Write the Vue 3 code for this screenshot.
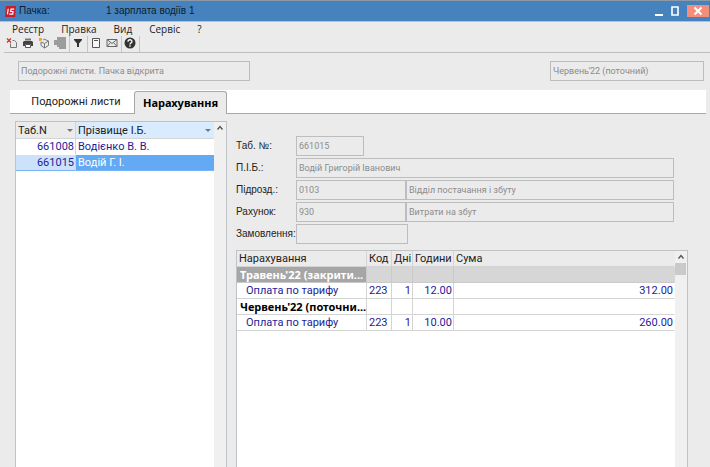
<template>
  <div class="window">
    <header class="titlebar">
      <svg class="app-logo" viewBox="0 0 12 12" aria-hidden="true">
        <path d="M1 0h11l-1 12H0z" fill="#c61f2d" />
        <path d="M3.5 3 2.7 9M10 3.5H6.6L6.2 6h2.6l-.4 2.8H4.6" fill="none" stroke="#fff" stroke-width="1.3" />
      </svg>
      <span class="title-label">Пачка:</span>
      <span class="title-name">1 зарплата водіїв 1</span>
      <div class="window-buttons">
        <button type="button" class="win-btn" aria-label="Згорнути">
          <svg viewBox="0 0 16 12"><path d="M4 10h8" stroke="#fff" stroke-width="2" /></svg>
        </button>
        <button type="button" class="win-btn" aria-label="Розгорнути">
          <svg viewBox="0 0 16 12"><path d="M5 2h6v8H5z" fill="none" stroke="#fff" stroke-width="1.6" /></svg>
        </button>
        <button type="button" class="win-btn close" aria-label="Закрити">
          <svg viewBox="0 0 16 12"><path d="m4.5 2.5 7 7m0-7-7 7" stroke="#fff" stroke-width="2" /></svg>
        </button>
      </div>
    </header>

    <nav class="menu">
      <button v-for="item in menu" :key="item" type="button">{{ item }}</button>
    </nav>

    <div class="toolbar">
      <div class="tool-group">
        <button type="button" aria-label="Видалити">
          <svg viewBox="0 0 12 12">
            <path d="m1 1.5 4 4m0-4-4 4" stroke="#c8372d" stroke-width="1.3" />
            <path d="M6.5 3.5h2l2 2v5h-6v-4" fill="none" stroke="#777" />
          </svg>
        </button>
        <button type="button" aria-label="Друк">
          <svg viewBox="0 0 12 12">
            <path d="M3 1.5h6v2H3z" fill="#777" />
            <path d="M2 4h8l1 1v4H9V7H3v2H1V5z" fill="#444" />
            <path d="M3.5 7.5h5v3h-5z" fill="#fff" stroke="#555" />
          </svg>
        </button>
        <button type="button" aria-label="Розрахунок">
          <svg viewBox="0 0 12 12">
            <path d="M7 2.5 10.5 4v4.5L6.5 11 3 8.5V5m0 0 3.5 1.5L10.5 4M6.5 6.5V11" fill="none" stroke="#777" />
            <path d="M1 1h3v1.5L3 4H1z" fill="#e8a33c" />
            <path d="m5 3 2-1" stroke="#777" />
          </svg>
        </button>
        <button type="button" aria-label="Операції" disabled>
          <svg viewBox="0 0 12 12"><path d="M3 0h9v12H5v-2H3V8H0V3h3z" fill="#9c9c9c" /></svg>
        </button>
      </div>
      <div class="tool-group">
        <button type="button" aria-label="Фільтр">
          <svg viewBox="0 0 12 12"><path d="M2 2h8v1L7 6.5V10H5V6.5L2 3z" fill="#333" /></svg>
        </button>
      </div>
      <div class="tool-group">
        <button type="button" aria-label="Документ">
          <svg viewBox="0 0 12 12">
            <path d="M2.5 1.5h7v9h-7z" fill="#f6f6f6" stroke="#555" />
            <path d="M4 3.5h4" stroke="#555" />
          </svg>
        </button>
        <button type="button" aria-label="Пошта">
          <svg viewBox="0 0 12 12">
            <path d="M1 2.5h10v7H1zl5 4 5-4M1 9.5l3.5-4m3 0 3.5 4" fill="none" stroke="#666" />
          </svg>
        </button>
      </div>
      <div class="tool-group">
        <button type="button" aria-label="Довідка">
          <svg viewBox="0 0 12 12">
            <circle cx="6" cy="6" r="5.5" fill="#333" />
            <path d="M4 4.8C4 2 8 2.2 8 4.5 8 6 6 5.8 6 7.4" fill="none" stroke="#fff" stroke-width="1.3" />
            <path d="M6 8.3v1.4" stroke="#fff" stroke-width="1.3" />
          </svg>
        </button>
      </div>
    </div>

    <div class="status-row">
      <input class="field status" type="text" value="Подорожні листи. Пачка відкрита" aria-label="Стан пачки" readonly />
      <input class="field period" type="text" value="Червень'22 (поточний)" aria-label="Період" readonly />
    </div>

    <div class="tabs" role="tablist">
      <button type="button" role="tab" class="tab" aria-selected="false">Подорожні листи</button>
      <button type="button" role="tab" class="tab active" aria-selected="true">Нарахування</button>
    </div>

    <main class="content">
      <section class="people">
        <div class="table-area">
          <table>
            <colgroup><col class="c-num" /><col /></colgroup>
            <thead>
              <tr>
                <th><span class="head-cell">Таб.N<i class="sort"></i></span></th>
                <th class="sorted"><span class="head-cell">Прізвище І.Б.<i class="sort"></i></span></th>
              </tr>
            </thead>
            <tbody>
              <tr v-for="p in people" :key="p.id" :class="{ selected: p.id === selectedId }" @click="selectedId = p.id">
                <td class="num">{{ p.id }}</td>
                <td>{{ p.name }}</td>
              </tr>
            </tbody>
          </table>
        </div>
        <div class="scroll">
          <svg viewBox="0 0 12 12"><path d="m3.5 7.5 2.5-3 2.5 3" fill="none" stroke="#555" stroke-width="1.4" /></svg>
        </div>
      </section>

      <section class="details">
        <form class="form" @submit.prevent>
          <label for="tab-no">Таб. №:</label>
          <div class="line"><input id="tab-no" class="field short" type="text" value="661015" readonly /></div>
          <label for="pib">П.І.Б.:</label>
          <div class="line"><input id="pib" class="field" type="text" value="Водій Григорій Іванович" readonly /></div>
          <label for="dept">Підрозд.:</label>
          <div class="line">
            <input id="dept" class="field code" type="text" value="0103" readonly />
            <input class="field" type="text" value="Відділ постачання і збуту" aria-label="Назва підрозділу" readonly />
          </div>
          <label for="account">Рахунок:</label>
          <div class="line">
            <input id="account" class="field code" type="text" value="930" readonly />
            <input class="field" type="text" value="Витрати на збут" aria-label="Назва рахунку" readonly />
          </div>
          <label for="order">Замовлення:</label>
          <div class="line"><input id="order" class="field order" type="text" value="" readonly /></div>
        </form>

        <div class="charges">
          <div class="table-area">
            <table>
              <colgroup>
                <col class="c-name" /><col class="c-code" /><col class="c-days" /><col class="c-hours" /><col />
              </colgroup>
              <thead>
                <tr><th v-for="h in heads" :key="h">{{ h }}</th></tr>
              </thead>
              <tbody>
                <template v-for="g in groups" :key="g.title">
                  <tr class="group" :class="{ current: g.current }">
                    <td>{{ g.title }}</td><td></td><td></td><td></td><td></td>
                  </tr>
                  <tr>
                    <td class="item">Оплата по тарифу</td>
                    <td>{{ g.code }}</td>
                    <td class="num">{{ g.days }}</td>
                    <td class="num">{{ g.hours }}</td>
                    <td class="num">{{ g.sum }}</td>
                  </tr>
                </template>
              </tbody>
            </table>
          </div>
          <div class="scroll">
            <svg viewBox="0 0 12 12"><path d="m3.5 7.5 2.5-3 2.5 3" fill="none" stroke="#555" stroke-width="1.4" /></svg>
            <div class="thumb"></div>
          </div>
        </div>
      </section>
    </main>
  </div>
</template>

<script setup>
import { ref } from 'vue'

const menu = ['Реєстр', 'Правка', 'Вид', 'Сервіс', '?']
const heads = ['Нарахування', 'Код', 'Дні', 'Години', 'Сума']

const selectedId = ref(661015)
const people = [
  { id: 661008, name: 'Водієнко В. В.' },
  { id: 661015, name: 'Водій Г. І.' }
]

const groups = [
  { title: "Травень'22 (закрити...", current: true, code: 223, days: 1, hours: '12.00', sum: '312.00' },
  { title: "Червень'22 (поточни...", current: false, code: 223, days: 1, hours: '10.00', sum: '260.00' }
]
</script>

<style>
body { margin: 0; background: #ebebeb; }
</style>

<style scoped>
.window { height: 100vh; display: flex; flex-direction: column; overflow: hidden; background: #ebebeb; color: #222; font-family: Roboto, "Noto Sans", sans-serif; font-size: 11px; line-height: 14px; }
.window * { box-sizing: border-box; }
button { margin: 0; padding: 0; border: 0; background: none; color: inherit; font: inherit; }
svg { display: block; }

.titlebar { flex: none; height: 22px; display: flex; align-items: center; padding-left: 5px; background: #4682bd; border-top: 1px solid #8c9aa8; border-bottom: 1px solid #a9c3dd; color: #0d1c2c; font-family: "Liberation Sans", sans-serif; font-size: 10px; }
.app-logo { width: 11px; height: 11px; }
.title-label { width: 87px; margin-left: 3px; }
.title-name { flex: 1; }
.window-buttons { display: flex; }
.win-btn { width: 16px; height: 12px; }
.win-btn svg { width: 16px; height: 12px; }
.win-btn.close { width: 22px; margin: 0 1px 0 4px; padding-left: 3px; background: #f58d7b; }

.menu { flex: none; height: 14px; display: flex; gap: 17px; padding-left: 12px; font-family: "Open Sans", "Noto Sans", sans-serif; font-size: 10px; line-height: 12px; }
.toolbar { flex: none; height: 17px; display: flex; margin-left: 4px; border-bottom: 1px solid #bdbdbd; }
.tool-group { display: flex; align-items: flex-start; gap: 4px; padding: 1px 3px 0 2px; border-right: 1px solid #c6c6c6; }
.tool-group svg { width: 12px; height: 12px; }

.field { min-width: 0; width: 100%; height: 20px; margin: 0; padding: 0 2px; border: 1px solid #bdbdbd; border-radius: 0; background: transparent; color: #8c8c8c; font: inherit; font-size: 9px; outline: 0; }
.status-row { flex: none; display: flex; justify-content: space-between; padding: 8px 6px 9px 18px; }
.status { width: 232px; }
.period { width: 154px; }

.tabs { flex: none; height: 24px; display: flex; align-items: flex-end; margin: 0 4px 0 10px; background: #fff; border-bottom: 1px solid #a8a8a8; }
.tab { width: 124px; height: 23px; padding-left: 8px; }
.tab.active { width: 93px; margin-bottom: -1px; padding: 0; background: #ebebeb; border: 1px solid #a8a8a8; border-bottom: 0; border-radius: 3px 3px 0 0; color: #000; font-family: "Noto Sans", sans-serif; font-weight: bold; }

.content { flex: 1; min-height: 0; display: flex; gap: 9px; padding: 7px 22px 0 15px; }
.people { flex: none; width: 212px; display: flex; background: #fff; border: 1px solid #bfc3c8; border-bottom: 0; }
.details { flex: 1; min-width: 0; display: flex; flex-direction: column; }
.form { display: grid; grid-template-columns: 60px 1fr; row-gap: 2px; align-items: center; padding: 15px 14px 6px 0; }
.form label { font-family: "Liberation Sans", sans-serif; font-size: 10px; white-space: nowrap; }
.line { display: flex; }
.field.short { width: 68px; }
.field.code { flex: none; width: 110px; }
.field.order { width: 112px; }

.charges { flex: 1; min-height: 0; display: flex; background: #fff; border: 1px solid #bfc3c8; border-bottom: 0; }
.table-area { flex: 1; min-width: 0; }
table { width: 100%; table-layout: fixed; border-collapse: separate; border-spacing: 0; }
.c-num { width: 60px; }
.c-name { width: 130px; }
.c-code { width: 25px; }
.c-days { width: 21px; }
.c-hours { width: 41px; }
th, td { height: 16px; padding: 0 0 0 2px; border-right: 1px solid #d4d4d4; border-bottom: 1px solid #d4d4d4; line-height: 15px; text-align: left; white-space: nowrap; }
th { background: #ebebeb; font-weight: normal; }
th:last-child, td:last-child { border-right-color: transparent; }
td { color: #1c1c9c; }
td.num { padding-right: 1px; text-align: right; }
td.item { padding-left: 9px; }
.head-cell { display: flex; align-items: center; justify-content: space-between; padding-right: 2px; }
.sort { border: 3px solid transparent; border-top-color: #777; border-bottom: 0; }
.people th.sorted { background: #d9ecff; }
.people th { height: 17px; }
.people td { border-bottom-color: transparent; }
.people .selected td { background: #64a9f3; color: #fff; border-bottom-color: #78b4f3; }
.people .selected td.num { background: #cce2fb; color: #1c1c9c; }
.group td { color: #000; font-family: "Noto Sans", sans-serif; font-weight: bold; }
.group td:first-child { padding: 0 0 0 3px; }
.current td { background: #d6d6d6; border-color: #cacaca; }
.current td:last-child { border-right-color: #d6d6d6; }
.current td:first-child { background: #a6a6a6; color: #fff; }

.scroll { flex: none; width: 12px; background: #f0f0f0; }
.scroll svg { width: 12px; height: 12px; }
.thumb { height: 12px; margin-right: 1px; background: #cacaca; }
</style>
